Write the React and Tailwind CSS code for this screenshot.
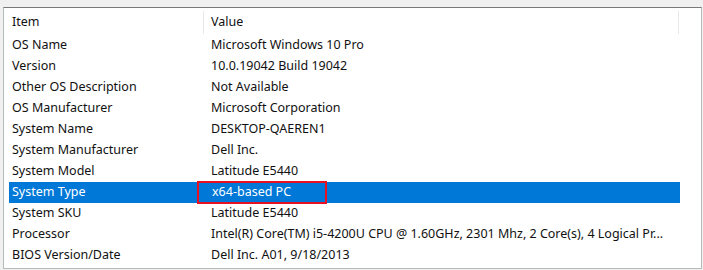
import React from "react";

const rows = [
  ["OS Name", "Microsoft Windows 10 Pro"],
  ["Version", "10.0.19042 Build 19042"],
  ["Other OS Description", "Not Available"],
  ["OS Manufacturer", "Microsoft Corporation"],
  ["System Name", "DESKTOP-QAEREN1"],
  ["System Manufacturer", "Dell Inc."],
  ["System Model", "Latitude E5440"],
  ["System Type", "x64-based PC"],
  ["System SKU", "Latitude E5440"],
  ["Processor", "Intel(R) Core(TM) i5-4200U CPU @ 1.60GHz, 2301 Mhz, 2 Core(s), 4 Logical Pr..."],
  ["BIOS Version/Date", "Dell Inc. A01, 9/18/2013"],
];

export default function App() {
  return (
    <div
      className="w-[703px] h-[270px] bg-[#f0f0f0] pl-[3px] pt-[7px] pr-[1px] pb-px text-[12.5px] text-[#111]"
      style={{ fontFamily: '"Noto Sans", "Open Sans", sans-serif' }}
    >
      <div className="h-full bg-white border border-[#b4bbb8] border-t-[#7a7a7a] pl-[5px] pt-px overflow-hidden">
        {/* header */}
        <div className="flex h-[26px] items-center">
          <div className="w-[195px] pl-[3px] border-r border-[#e8e8e8] h-[23px] flex items-center">Item</div>
          <div className="w-[475px] pl-[7px] border-r border-[#e8e8e8] h-[23px] flex items-center">Value</div>
        </div>
        {rows.map(([k, v]) => {
          const sel = k === "System Type";
          return (
            <div
              key={k}
              className={`flex h-[21px] w-[671px] items-center ${sel ? "bg-[#0078d7] text-white" : ""}`}
            >
              <div className="w-[195px] pl-[3px] whitespace-nowrap">{k}</div>
              <div className="w-[476px] h-full flex items-center">
                {sel ? (
                  <div className="ml-[-7px] h-[23px] w-[130px] border-2 border-[#e81123] pl-[13px] flex items-center whitespace-nowrap">
                    {v}
                  </div>
                ) : (
                  <div className="pl-[7px] whitespace-nowrap">{v}</div>
                )}
              </div>
            </div>
          );
        })}
      </div>
    </div>
  );
}
